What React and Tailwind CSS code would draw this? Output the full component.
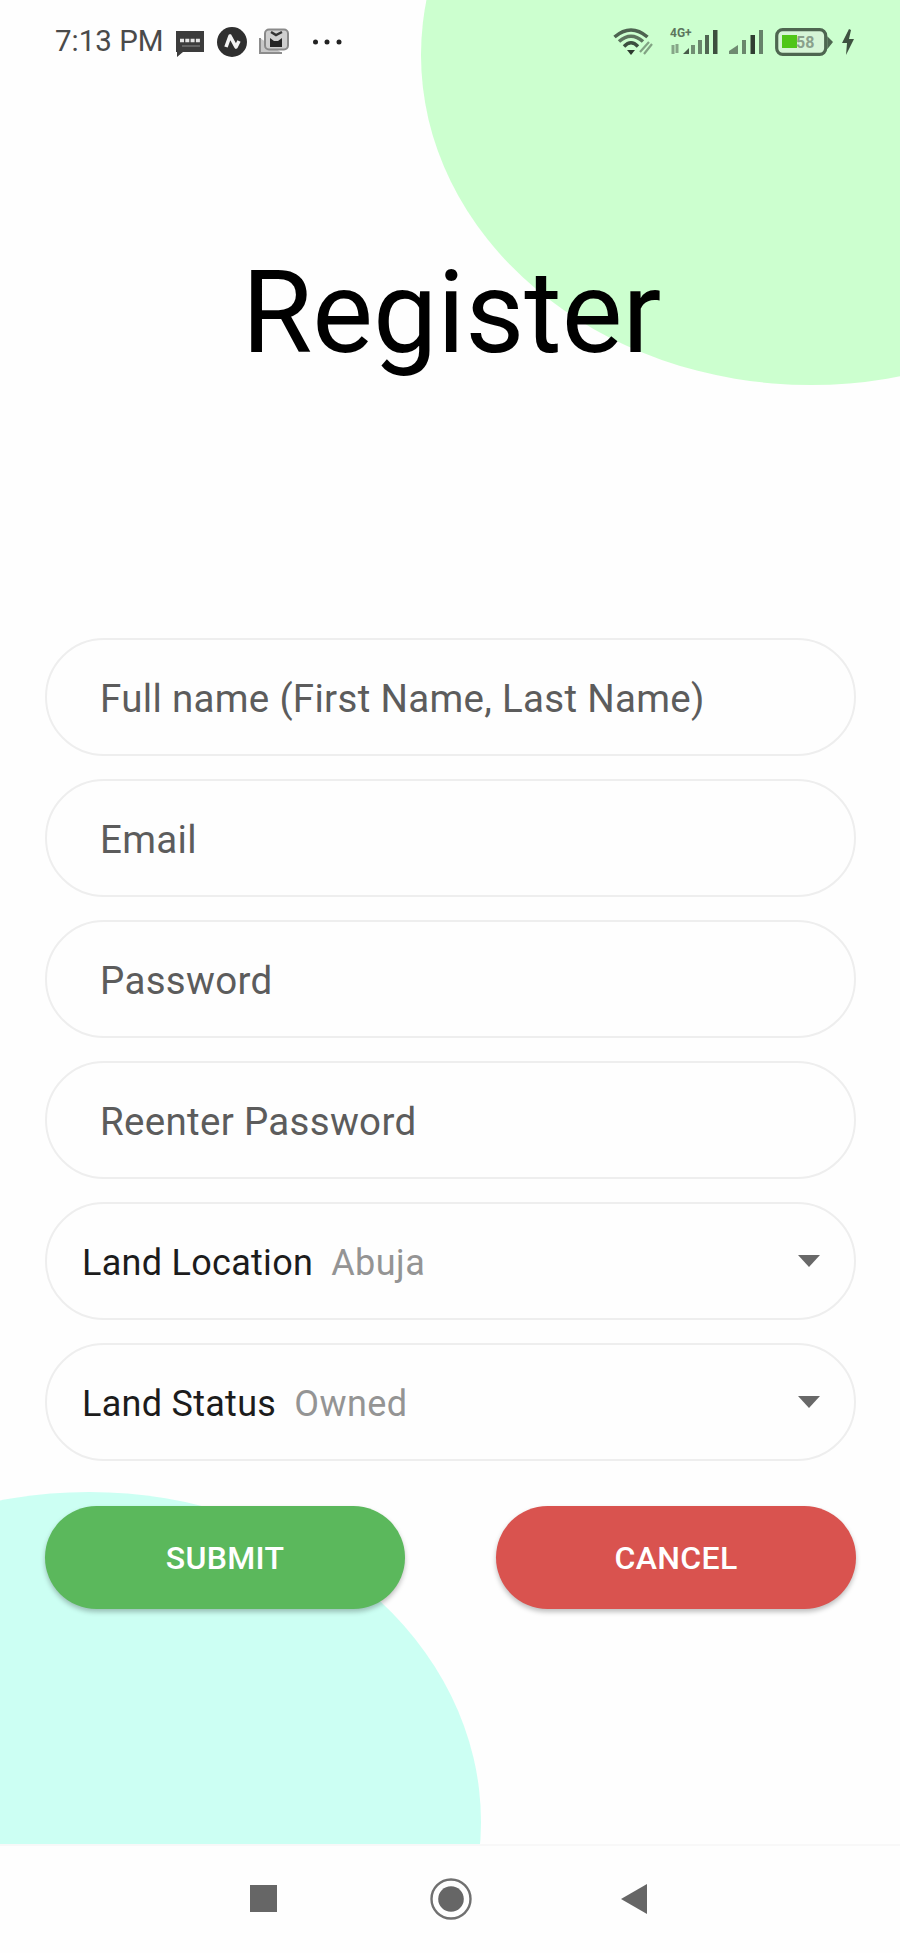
const textFields = [
  'Full name (First Name, Last Name)',
  'Email',
  'Password',
  'Reenter Password',
];

const selectFields = [
  { label: 'Land Location', value: 'Abuja' },
  { label: 'Land Status', value: 'Owned' },
];

function StatusBar() {
  return (
    <div className="flex h-[84px] items-center justify-between pl-[55px] pr-[45px]">
      <div className="flex items-center">
        <span className="w-[121px] whitespace-nowrap text-[29.5px] leading-none text-[#4a4a4a]">7:13 PM</span>

        {/* Message */}
        <svg width="28" height="30" viewBox="0 0 28 30" className="mt-1">
          <path d="M0 2H28V23H7L1 28V23H0Z" fill="#3c3c3c" />
          <path d="M4 11.5H24" stroke="#e5e5e5" strokeWidth="3.5" strokeDasharray="4 1.3" />
          <path d="M6 17H24" stroke="#707070" strokeWidth="1.5" />
        </svg>

        {/* App badge */}
        <svg width="30" height="30" viewBox="0 0 30 30" className="ml-[13px]">
          <circle cx="15" cy="15" r="15" fill="#2f2f2f" />
          <path d="M9 20L13 9L19 20L22 14" fill="none" stroke="#f3f3f3" strokeWidth="3.6" strokeLinejoin="round" />
        </svg>

        {/* Gallery */}
        <svg width="32" height="28" viewBox="0 0 32 28" className="ml-[11px]">
          <path d="M2 10V25H24" fill="#c8c8c8" stroke="#8c8c8c" strokeWidth="2" />
          <rect x="7" y="1.5" width="23" height="20" rx="4" fill="#cfcfcf" stroke="#8a8a8a" strokeWidth="2" />
          <path d="M13 4L18 7L24 4" fill="none" stroke="#333" strokeWidth="2.5" />
          <path d="M12 10L16 13H20L24 10V19H12Z" fill="#262626" />
        </svg>

        {/* More */}
        <svg width="30" height="8" viewBox="0 0 30 8" className="ml-[22px]">
          <circle cx="3.5" cy="4" r="2.5" fill="#222" />
          <circle cx="15" cy="4" r="2.5" fill="#222" />
          <circle cx="27" cy="4" r="2.5" fill="#222" />
        </svg>
      </div>

      <div className="flex items-center">
        {/* Wifi */}
        <svg width="40" height="28" viewBox="0 0 40 28" fill="none">
          <path d="M1.5 9Q18 -5 34.5 9" stroke="#4d6350" strokeWidth="3.6" />
          <path d="M6 13.5Q18 3 30 13.5" stroke="#5c755e" strokeWidth="3.6" />
          <path d="M11 18.5Q18 11 25 18.5" stroke="#3c4f3f" strokeWidth="3.4" />
          <path d="M14 22H22L18 27Z" fill="#2c3a2e" />
          <path d="M27 24L36 14M31 26L39 16" stroke="#82a384" strokeWidth="2.2" />
        </svg>

        {/* Mobile data */}
        <svg width="52" height="32" viewBox="-2 -4 52 32" className="mb-1 ml-[14px]">
          <text x="1" y="9" fill="#5c755e" className="font-[Roboto] text-[12px] font-bold">4G+</text>
          <path d="M4 26V17M8 25V16" stroke="#86a688" strokeWidth="3" />
          <path d="M14 26L20 20V26Z" fill="#465a48" />
          <rect x="22" y="17" width="4" height="9" fill="#718f73" />
          <rect x="29" y="12" width="4" height="14" fill="#6a866c" />
          <rect x="36" y="7" width="4" height="19" fill="#506652" />
          <rect x="44" y="2" width="4.5" height="24" fill="#3d4f3f" />
        </svg>

        {/* Second sim */}
        <svg width="35" height="28" viewBox="0 0 35 28" className="ml-[10px]">
          <path d="M0 26V23L9 17V26Z" fill="#6f8b71" />
          <rect x="13" y="12" width="4" height="14" fill="#6a866c" />
          <rect x="21.5" y="7" width="4.5" height="19" fill="#2f3d31" />
          <rect x="30" y="2" width="4" height="24" fill="#66816a" />
        </svg>

        {/* Battery */}
        <svg width="58" height="28" viewBox="0 0 58 28" className="ml-[11px]">
          <rect x="1.7" y="1.7" width="49" height="24.6" rx="6" fill="#d6f5d6" stroke="#4e6650" strokeWidth="3.2" />
          <path d="M53 10L57 14L53 19Z" fill="#4e6650" stroke="#4e6650" strokeWidth="1.5" />
          <rect x="7" y="7" width="15" height="13" fill="#4fc617" />
          <text x="21" y="20" fill="#8aa08b" className="font-[Roboto] text-[16px] font-bold">58</text>
        </svg>

        {/* Charging */}
        <svg width="14" height="26" viewBox="0 0 14 26" className="ml-2">
          <path d="M8 0L1 14H6L5 26L13 10H8L10 1Z" fill="#3e5240" />
        </svg>
      </div>
    </div>
  );
}

function Caret() {
  return (
    <svg width="22" height="12" viewBox="0 0 22 12">
      <path d="M0 0H22L11 12Z" fill="#686868" />
    </svg>
  );
}

function NavigationBar() {
  return (
    <div className="relative flex h-[109px] items-center border-t-2 border-[#f8f8f8] bg-[#fefefe] pb-0.5 pl-[250px]">
      <div className="size-[27px] bg-[#666]" />
      <svg width="42" height="42" viewBox="0 0 42 42" className="ml-[153px]">
        <circle cx="21" cy="21" r="19.5" fill="none" stroke="#707070" strokeWidth="2.4" />
        <circle cx="21" cy="21" r="12.8" fill="#666" />
      </svg>
      <svg width="26" height="30" viewBox="0 0 26 30" className="ml-[149px]">
        <path d="M0 15L26 0V30Z" fill="#666" />
      </svg>
    </div>
  );
}

export default function App() {
  return (
    <div className="relative flex h-[1953px] w-[900px] flex-col overflow-hidden bg-[#fefefe] font-[Roboto,sans-serif]">
      {/* Background bubbles */}
      <div className="absolute left-[421px] top-[-275px] h-[660px] w-[780px] rounded-[50%] bg-[#ccffcf]" />
      <div className="absolute left-[-303px] top-[1492px] h-[660px] w-[784px] rounded-[50%] bg-[#ccfff3]" />

      <div className="relative flex flex-1 flex-col">
        <StatusBar />

        <h1 className="mt-[162px] h-[392px] pl-[3px] text-center text-[114.5px] leading-[135px] text-black">
          Register
        </h1>

        <form className="pl-[45px] pr-[44px]">
          <div className="flex flex-col gap-[23px]">
            {textFields.map((field) => (
              <div key={field} className="flex h-[118px] items-center rounded-full border-2 border-[#eee] bg-[#fefefe] px-[53px] pt-[4px]">
                <span className="whitespace-nowrap text-[38.5px] tracking-[0.008em] text-[#5c5c5c]">{field}</span>
              </div>
            ))}
            {selectFields.map((field) => (
              <div key={field.label} className="flex h-[118px] items-center rounded-full border-2 border-[#eee] bg-[#fefefe] pl-[35px] pr-[34px]">
                <span className="mt-[3px] whitespace-nowrap text-[36px] tracking-[0.008em] text-[#1c1c1c]">{field.label}</span>
                <span className="ml-[18px] mt-[3px] flex-1 whitespace-nowrap text-[36px] tracking-[0.013em] text-[#949494]">{field.value}</span>
                <Caret />
              </div>
            ))}
          </div>

          <div className="mt-[45px] flex justify-between">
            <button type="button" className="h-[103px] w-[360px] rounded-full bg-[#5bb85c] text-[32px] font-medium tracking-[0.01em] text-white shadow-[0_3px_5px_rgba(0,0,0,0.25)]">
              SUBMIT
            </button>
            <button type="button" className="h-[103px] w-[360px] rounded-full bg-[#d9534f] text-[32px] font-medium tracking-[0.01em] text-white shadow-[0_3px_5px_rgba(0,0,0,0.25)]">
              CANCEL
            </button>
          </div>
        </form>
      </div>

      <NavigationBar />
    </div>
  );
}
